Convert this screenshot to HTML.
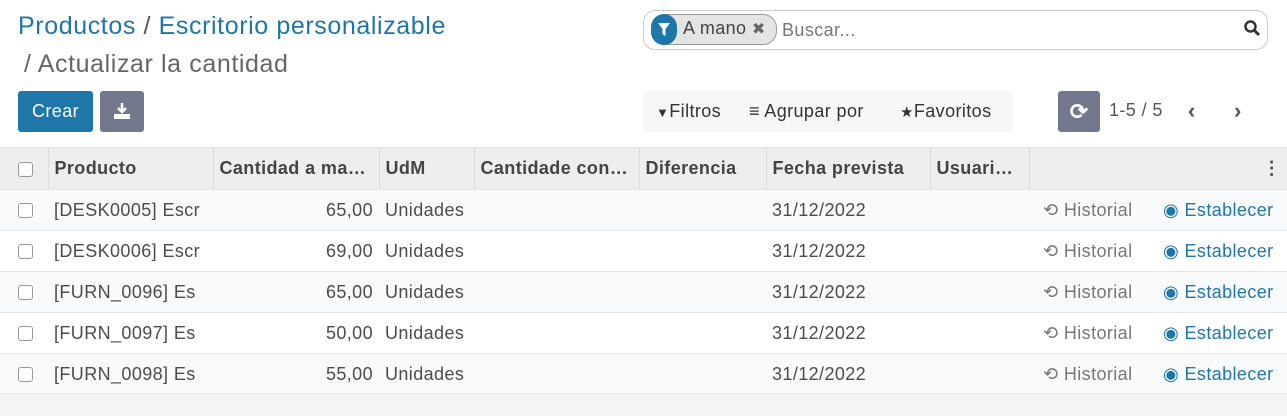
<!DOCTYPE html>
<html><head><meta charset="utf-8"><style>
body{margin:0;width:1287px;height:415px;overflow:hidden;background:#fff;font-family:"Liberation Sans",sans-serif;color:#4c4c4c;position:relative}
.a{position:absolute;white-space:nowrap}
.bc{font-size:25px;color:#017e84;letter-spacing:0.6px}
table{position:absolute;top:147px;left:0;width:1287px;border-collapse:collapse;font-size:18px;letter-spacing:0.4px;table-layout:fixed}
th{height:41px;background:#eeeeee;text-align:left;font-weight:bold;color:#444;padding:0 6px;border-right:1px solid #dcdcdc;border-top:1px solid #dee2e6;overflow:hidden;white-space:nowrap;text-overflow:ellipsis}
td{height:40px;padding:0 6px;border-top:1px solid #e5e5e5;white-space:nowrap;overflow:hidden}
tr.o td{background:#f9fafb}
.cb{display:inline-block;width:13px;height:13px;border:1px solid #999;border-radius:3px;background:#fff;vertical-align:middle}
.r{text-align:right}
.h{color:#777}
.e{color:#1f76a8}
.t{font-size:18px;letter-spacing:0.4px}
</style></head><body>
<div class="a bc" style="left:18px;top:12px;color:#1f76a8">Productos <span style="color:#555">/</span> Escritorio personalizable</div>
<div class="a" style="left:24px;top:50px;font-size:25px;letter-spacing:0.6px;color:#666">/ Actualizar la cantidad</div>
<div class="a t" style="left:18px;top:91px;width:75px;height:41px;background:#1f76a8;border-radius:3px;color:#fff;line-height:41px;text-align:center">Crear</div>
<div class="a" style="left:100px;top:91px;width:44px;height:41px;background:#74788d;border-radius:3px">
<svg width="44" height="41"><path d="M22 12v9M18 17l4 4 4-4" stroke="#fff" stroke-width="2.5" fill="none"/><rect x="14" y="23" width="16" height="5" fill="#fff"/></svg></div>
<div class="a" style="left:643px;top:10px;width:625px;height:40px;border:1px solid #ccc;border-radius:12px;box-sizing:border-box"></div>
<div class="a" style="left:651px;top:14px;width:126px;height:31px;background:#e4e4e4;border:1px solid #999;border-radius:14px;box-sizing:border-box"></div>
<div class="a" style="left:651px;top:14px;width:26px;height:31px;background:#1f76a8;border-radius:14px"><svg width="26" height="31"><path d="M7 9h12l-4.5 6v7l-3-2v-5z" fill="#fff"/></svg></div>
<div class="a t" style="left:683px;top:18px;color:#444">A mano <span style="color:#666;font-size:16px">✖</span></div>
<div class="a t" style="left:782px;top:20px;color:#777">Buscar...</div>
<svg class="a" style="left:1243px;top:19px" width="18" height="18"><circle cx="7.5" cy="7.5" r="5" stroke="#333" stroke-width="2.5" fill="none"/><path d="M11 11l5 5" stroke="#333" stroke-width="3"/></svg>
<div class="a" style="left:643px;top:91px;width:370px;height:41px;background:#f6f7f9;border-radius:3px"></div>
<div class="a t" style="left:656px;top:101px;color:#333"><span style="font-size:13px">▼</span>Filtros</div>
<div class="a t" style="left:749px;top:101px;color:#333">≡ Agrupar por</div>
<div class="a t" style="left:900px;top:101px;color:#333"><span style="font-size:15px">★</span>Favoritos</div>
<div class="a" style="left:1058px;top:91px;width:42px;height:41px;background:#74788d;border-radius:3px;color:#fff;font-size:22px;font-weight:bold;line-height:41px;text-align:center">⟳</div>
<div class="a t" style="left:1109px;top:100px;color:#555">1-5 / 5</div>
<div class="a" style="left:1188px;top:98px;font-size:22px;color:#555;font-weight:bold">‹</div>
<div class="a" style="left:1234px;top:98px;font-size:22px;color:#555;font-weight:bold">›</div>
<table>
<colgroup><col style="width:48px"><col style="width:165px"><col style="width:166px"><col style="width:95px"><col style="width:165px"><col style="width:127px"><col style="width:164px"><col style="width:99px"><col style="width:128px"><col></colgroup>
<tr><th style="padding-left:18px"><span class="cb"></span></th><th>Producto</th><th>Cantidad a ma…</th><th>UdM</th><th>Cantidade con…</th><th>Diferencia</th><th>Fecha prevista</th><th>Usuario…</th><th style="border-right:0"></th><th class="r" style="border-right:0">⋮</th></tr>
<tr class="o"><td style="padding-left:18px"><span class="cb"></span></td><td>[DESK0005] Escr</td><td class="r">65,00</td><td>Unidades</td><td></td><td></td><td>31/12/2022</td><td></td><td class="h" style="padding-left:14px">⟲ Historial</td><td class="e">◉ Establecer</td></tr>
<tr><td style="padding-left:18px"><span class="cb"></span></td><td>[DESK0006] Escr</td><td class="r">69,00</td><td>Unidades</td><td></td><td></td><td>31/12/2022</td><td></td><td class="h" style="padding-left:14px">⟲ Historial</td><td class="e">◉ Establecer</td></tr>
<tr class="o"><td style="padding-left:18px"><span class="cb"></span></td><td>[FURN_0096] Es</td><td class="r">65,00</td><td>Unidades</td><td></td><td></td><td>31/12/2022</td><td></td><td class="h" style="padding-left:14px">⟲ Historial</td><td class="e">◉ Establecer</td></tr>
<tr><td style="padding-left:18px"><span class="cb"></span></td><td>[FURN_0097] Es</td><td class="r">50,00</td><td>Unidades</td><td></td><td></td><td>31/12/2022</td><td></td><td class="h" style="padding-left:14px">⟲ Historial</td><td class="e">◉ Establecer</td></tr>
<tr class="o"><td style="padding-left:18px"><span class="cb"></span></td><td>[FURN_0098] Es</td><td class="r">55,00</td><td>Unidades</td><td></td><td></td><td>31/12/2022</td><td></td><td class="h" style="padding-left:14px">⟲ Historial</td><td class="e">◉ Establecer</td></tr>
</table>
<div class="a" style="left:0;top:393px;width:1287px;height:22px;background:#f2f4f6;border-top:1px solid #e5e5e5"></div>
</body></html>
